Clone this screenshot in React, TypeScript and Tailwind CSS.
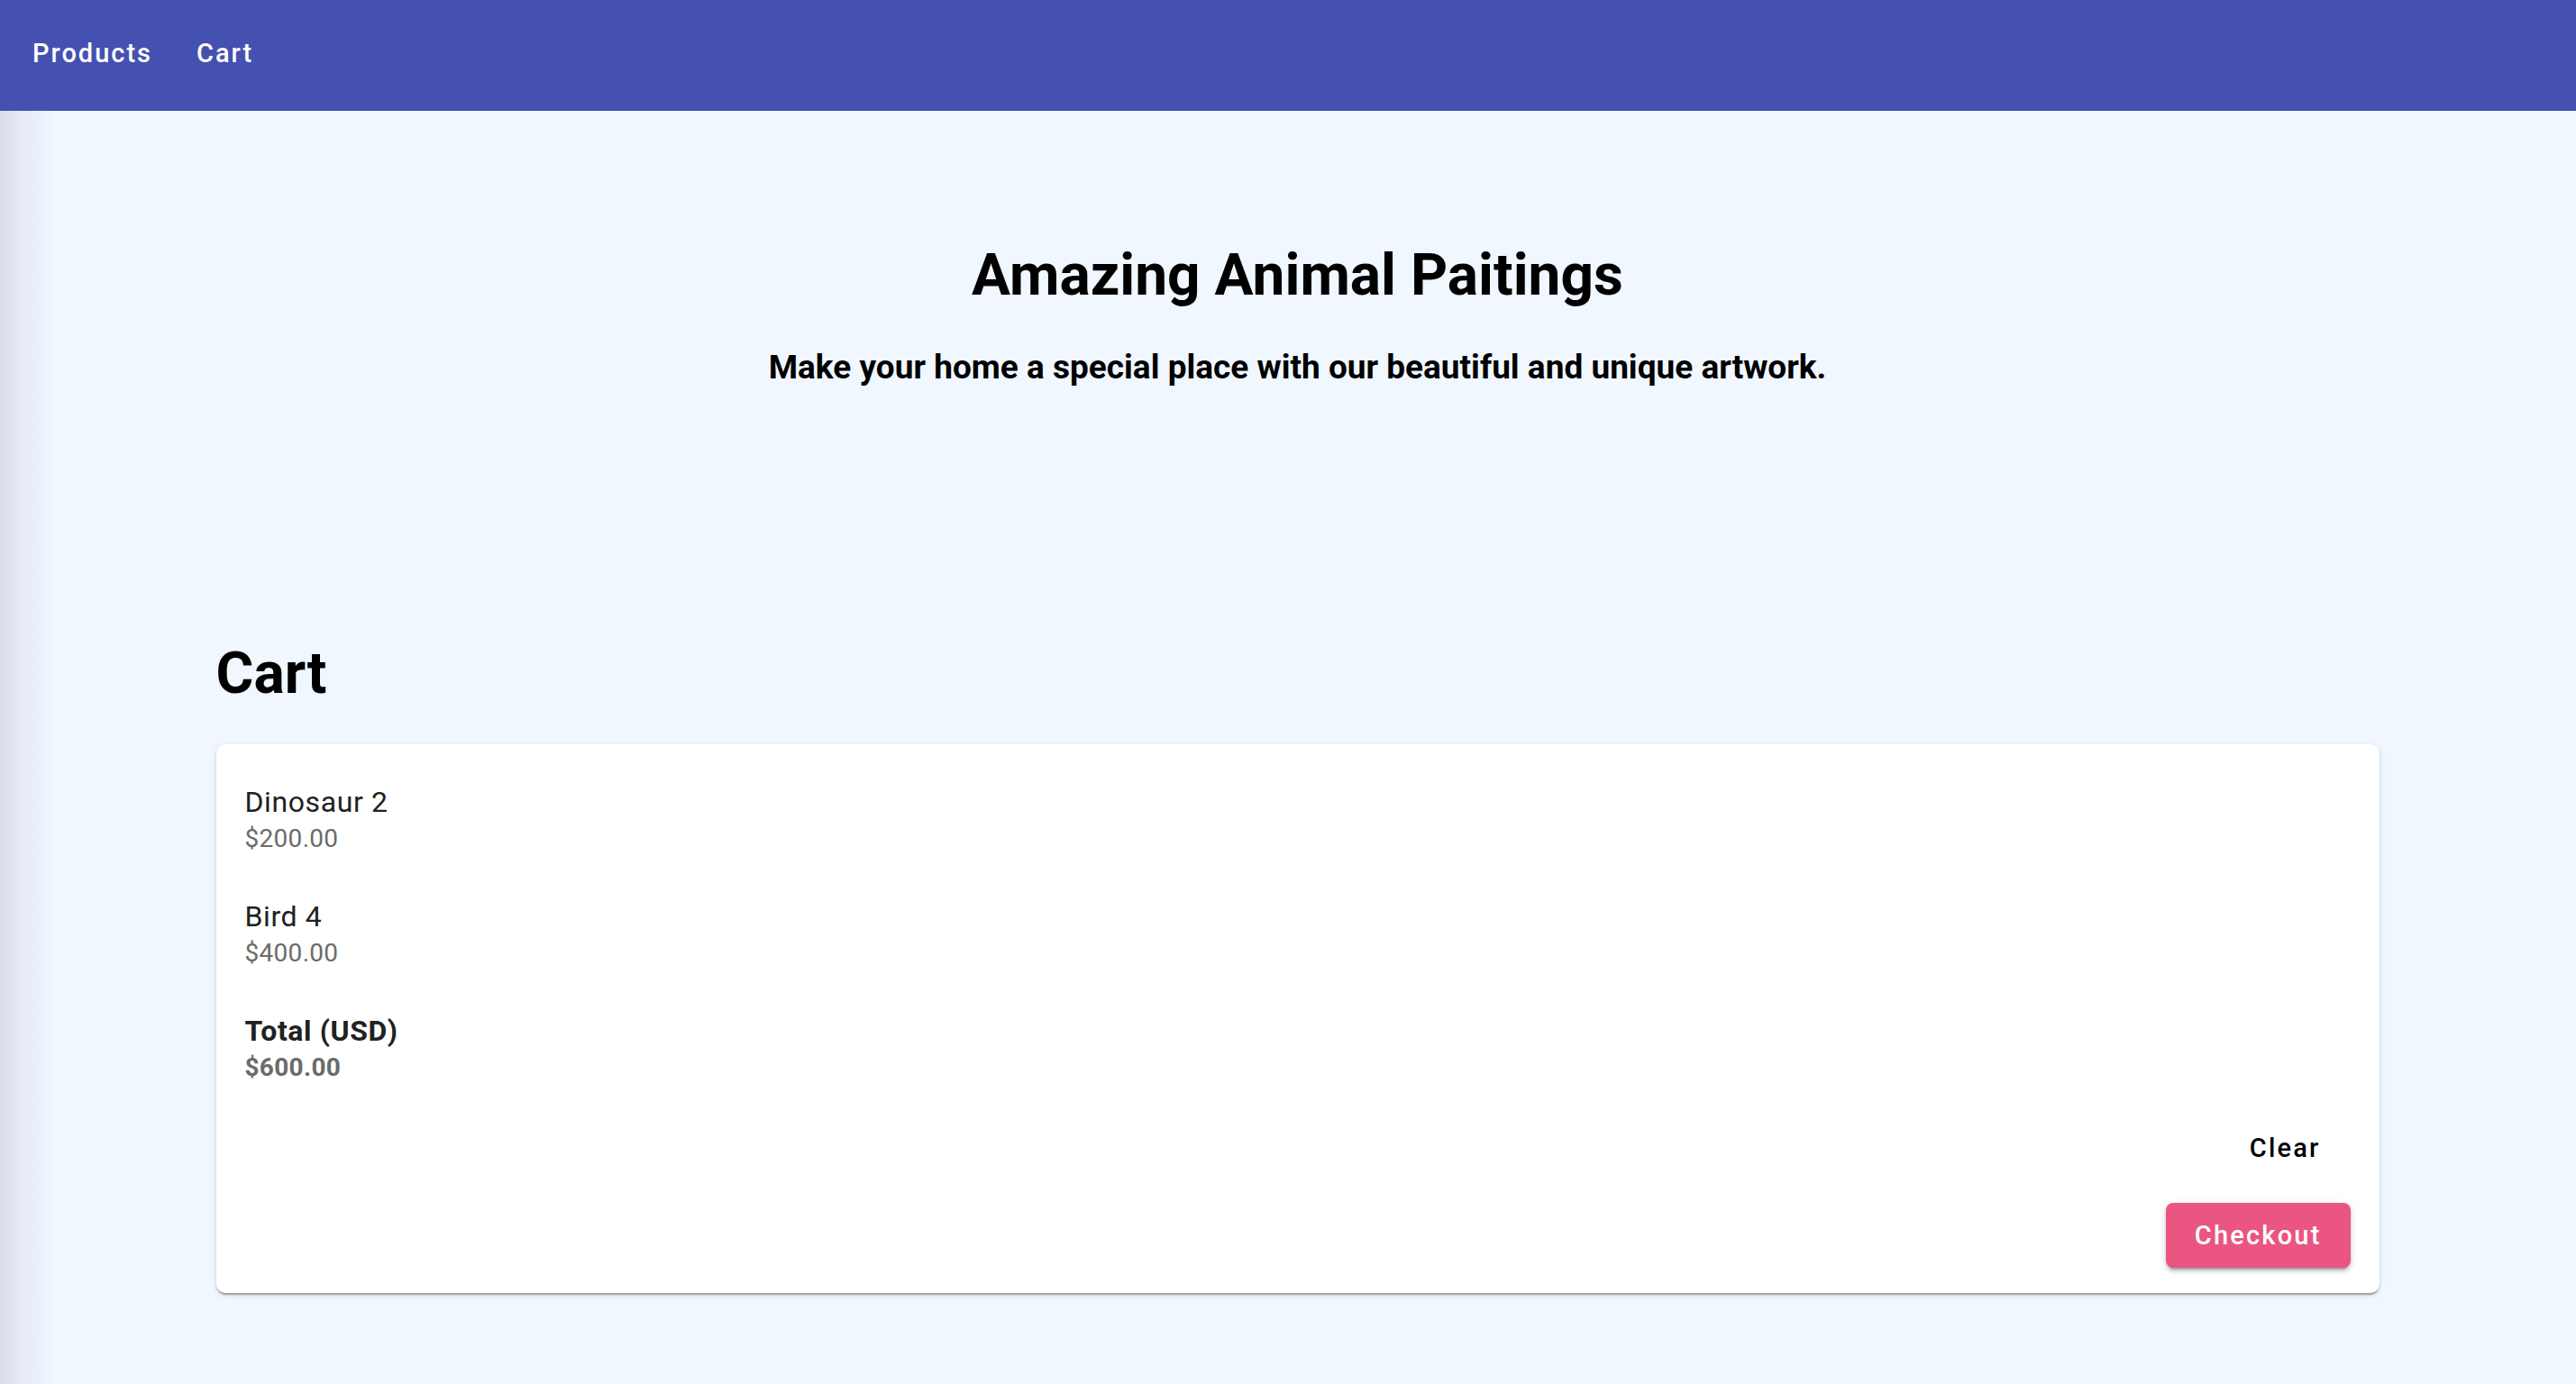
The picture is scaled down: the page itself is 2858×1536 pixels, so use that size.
import React from "react";

const items = [
  { name: "Dinosaur 2", price: "$200.00" },
  { name: "Bird 4", price: "$400.00" },
];

const App = () => {
  return (
    <div className="min-h-screen font-['Roboto',sans-serif] bg-[linear-gradient(to_right,#d9dde8_0px,#e6ebf5_25px,#f0f7ff_60px)]">
      {/* Top bar */}
      <nav className="flex h-[123px] items-center gap-[49px] bg-[#4551b0] pb-[5px] pl-[36px]">
        <a className="text-[29px] leading-[49px] font-medium tracking-[2px] text-white">Products</a>
        <a className="text-[29px] leading-[49px] font-medium tracking-[2px] text-white">Cart</a>
      </nav>

      <main className="pl-[21px]">
        {/* Hero */}
        <section className="pt-[143px] text-center text-black">
          <h1 className="text-[64px] leading-[79px] font-bold">Amazing Animal Paitings</h1>
          <p className="mt-[41px] text-[37px] leading-[43px] font-bold">
            Make your home a special place with our beautiful and unique artwork.
          </p>
        </section>

        {/* Cart */}
        <section className="mx-auto mt-[280px] w-[2400px] pb-[100px]">
          <h2 className="text-[64px] leading-[77px] font-bold text-black">Cart</h2>

          <div className="mt-[40px] rounded-[10px] bg-white px-[32px] pt-[41px] pb-[28px] shadow-[0_4px_2px_-2px_rgba(0,0,0,0.2),0_2px_2px_0_rgba(0,0,0,0.14),0_2px_6px_0_rgba(0,0,0,0.12)]">
            <ul className="flex flex-col gap-[45px]">
              {items.map((item) => (
                <li key={item.name}>
                  <div className="text-[32px] leading-[46px] tracking-[0.6px] text-[#212121]">{item.name}</div>
                  <div className="text-[28px] leading-[36px] tracking-[0.3px] text-[#6b6b6b]">{item.price}</div>
                </li>
              ))}
              <li>
                <div className="text-[32px] leading-[46px] font-bold tracking-[0.6px] text-[#212121]">Total (USD)</div>
                <div className="text-[28px] leading-[36px] font-bold tracking-[0.3px] text-[#6b6b6b]">$600.00</div>
              </li>
            </ul>

            <div className="mt-[35px] flex flex-col items-end gap-[24px]">
              <button className="mr-[17px] rounded-[8px] px-[16px] py-[12px] text-[29px] leading-[49px] font-medium tracking-[2.2px] text-black">
                Clear
              </button>
              <button className="rounded-[8px] bg-[#ea5582] px-[32px] py-[12px] text-[29px] leading-[48px] font-medium tracking-[2.2px] text-white shadow-[0_6px_2px_-4px_rgba(0,0,0,0.2),0_4px_4px_0_rgba(0,0,0,0.14),0_2px_10px_0_rgba(0,0,0,0.12)]">
                Checkout
              </button>
            </div>
          </div>
        </section>
      </main>
    </div>
  );
};

export default App;
